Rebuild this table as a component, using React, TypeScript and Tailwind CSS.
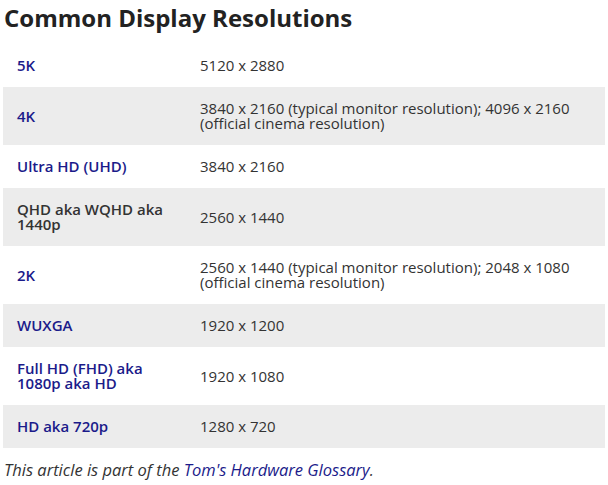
const rows: { name: string; link: boolean; value: string }[] = [
  { name: '5K', link: true, value: '5120 x 2880' },
  { name: '4K', link: true, value: '3840 x 2160 (typical monitor resolution); 4096 x 2160 (official cinema resolution)' },
  { name: 'Ultra HD (UHD)', link: true, value: '3840 x 2160' },
  { name: 'QHD aka WQHD aka 1440p', link: false, value: '2560 x 1440' },
  { name: '2K', link: true, value: '2560 x 1440 (typical monitor resolution); 2048 x 1080 (official cinema resolution)' },
  { name: 'WUXGA', link: true, value: '1920 x 1200' },
  { name: 'Full HD (FHD) aka 1080p aka HD', link: true, value: '1920 x 1080' },
  { name: 'HD aka 720p', link: true, value: '1280 x 720' },
]

export default function App() {
  return (
    <div className="w-[608px] h-[485px] bg-white font-['Open_Sans',sans-serif] text-[#333] overflow-hidden">
      <h2 className="pl-[4px] pt-[1px] text-[24px] leading-[34px] font-bold text-[#222]">
        Common Display Resolutions
      </h2>
      <div className="ml-[3px] mt-[9px] w-[602px]">
        {rows.map((r, i) => (
          <div
            key={r.name}
            className={`flex items-center py-[14px] text-[15px] leading-[15px] ${i % 2 === 1 ? 'bg-[#ececec]' : 'bg-white'}`}
          >
            <div className="w-[183px] shrink-0 px-[14px] font-semibold">
              {r.link ? <a className="text-[#1b1b8a]">{r.name}</a> : <span className="text-[#333]">{r.name}</span>}
            </div>
            <div className="flex-1 pl-[14px] pr-[14px]">{r.value}</div>
          </div>
        ))}
      </div>
      <p className="pl-[4px] mt-[12px] text-[16.5px] leading-[20px] italic">
        This article is part of the <a className="text-[#1b1b8a]">Tom's Hardware Glossary</a>.
      </p>
    </div>
  )
}
